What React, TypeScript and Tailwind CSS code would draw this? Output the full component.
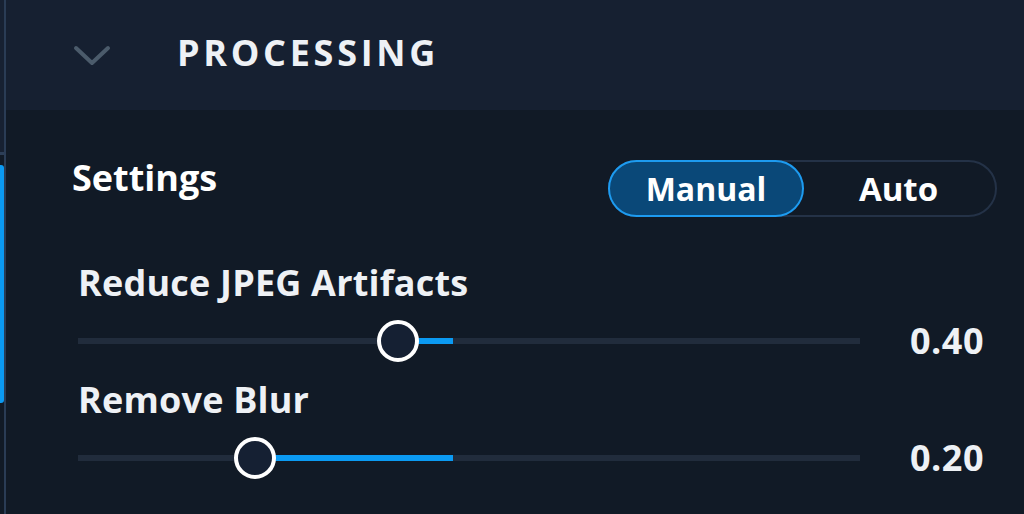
import React from "react";

const Slider = ({ label, value, thumb, fillEnd }: { label: string; value: string; thumb: string; fillEnd: string }) => (
  <div className="flex flex-col">
    <div className="text-[36px] font-bold leading-none tracking-[0.2px] text-[#eef1f5]">{label}</div>
    <div className="mt-[19px] flex items-center">
      <div className="relative h-[42px] w-[782px]">
        <div className="absolute left-0 right-0 top-[18px] h-[6px] bg-[#212c3c]" />
        <div className={`absolute top-[18px] h-[6px] bg-[#0b9af2] ${fillEnd}`} />
        <div className={`absolute top-0 h-[42px] w-[42px] -translate-x-1/2 rounded-full border-[4px] border-white bg-[#152033] ${thumb}`} />
      </div>
      <div className="mr-[13px] flex-1 text-right text-[36px] font-bold leading-none tracking-[0.5px] text-[#eef1f5]">{value}</div>
    </div>
  </div>
);

export default function App() {
  return (
    <div className="flex h-[514px] w-[1024px] overflow-hidden bg-[#111a26] font-['Open_Sans',sans-serif]">
      {/* left edge */}
      <div className="flex w-[4px] flex-col">
        <div className="h-[155px] border-b-[3px] border-[#2c3e57] bg-[#172132]" />
        <div className="mt-[10px] h-[238px] rounded-r-[3px] bg-[#0b9af2]" />
      </div>
      <div className="w-[2px] bg-[#2a3c55]" />

      <div className="flex flex-1 flex-col">
        {/* header */}
        <div className="flex h-[110px] items-center bg-[#162031] pl-[66px]">
          <svg width="40" height="24" viewBox="0 0 40 24" className="mt-[2px]">
            <path d="M4 4 L20 19 L36 4" fill="none" stroke="#4b5b6b" strokeWidth="4" strokeLinecap="round" strokeLinejoin="round" />
          </svg>
          <div className="mb-[4px] ml-[65px] text-[36px] font-bold leading-none tracking-[3.7px] text-[#eef1f5]">PROCESSING</div>
        </div>

        {/* body */}
        <div className="flex flex-col pl-[66px] pr-[27px]">
          <div className="mt-[50px] flex items-start justify-between">
            <div className="text-[36px] font-bold leading-none text-white">Settings</div>
            <div className="flex h-[57px] w-[389px] rounded-full border-2 border-[#243247]">
              <div className="-m-[2px] flex h-[57px] w-[196px] items-center justify-center rounded-full border-2 border-[#1d9bf0] bg-[#0a4878] text-[32px] font-bold leading-none text-white">
                Manual
              </div>
              <div className="flex flex-1 items-center justify-center text-[33px] font-bold leading-none text-white">Auto</div>
            </div>
          </div>

          <div className="mt-[48px] flex flex-col gap-[20px] pl-[6px]">
            <Slider label="Reduce JPEG Artifacts" value="0.40" thumb="left-[320px]" fillEnd="left-[320px] w-[55px]" />
            <Slider label="Remove Blur" value="0.20" thumb="left-[177px]" fillEnd="left-[177px] w-[198px]" />
          </div>
        </div>
      </div>
    </div>
  );
}
